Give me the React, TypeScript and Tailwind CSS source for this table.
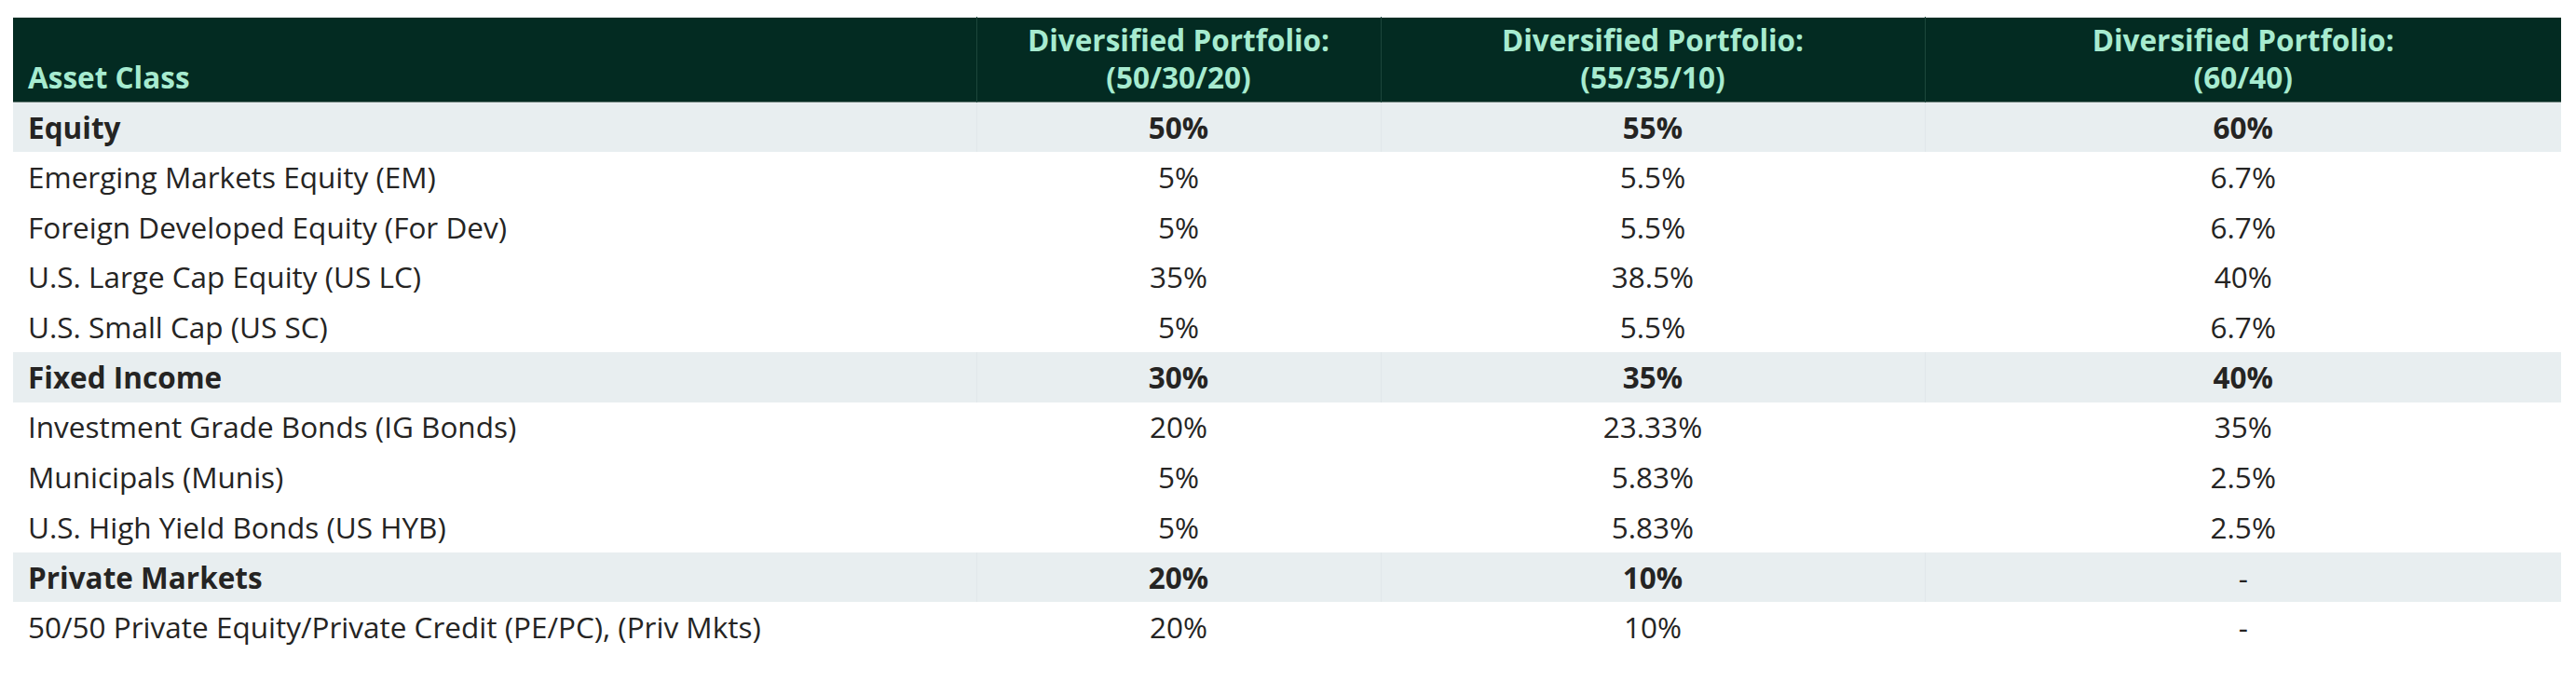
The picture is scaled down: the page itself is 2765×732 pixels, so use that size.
const rows: { label: string; values: string[]; group?: boolean }[] = [
  { label: "Equity", values: ["50%", "55%", "60%"], group: true },
  { label: "Emerging Markets Equity (EM)", values: ["5%", "5.5%", "6.7%"] },
  { label: "Foreign Developed Equity (For Dev)", values: ["5%", "5.5%", "6.7%"] },
  { label: "U.S. Large Cap Equity (US LC)", values: ["35%", "38.5%", "40%"] },
  { label: "U.S. Small Cap (US SC)", values: ["5%", "5.5%", "6.7%"] },
  { label: "Fixed Income", values: ["30%", "35%", "40%"], group: true },
  { label: "Investment Grade Bonds (IG Bonds)", values: ["20%", "23.33%", "35%"] },
  { label: "Municipals (Munis)", values: ["5%", "5.83%", "2.5%"] },
  { label: "U.S. High Yield Bonds (US HYB)", values: ["5%", "5.83%", "2.5%"] },
  { label: "Private Markets", values: ["20%", "10%", "-"], group: true },
  { label: "50/50 Private Equity/Private Credit (PE/PC), (Priv Mkts)", values: ["20%", "10%", "-"] },
];

const portfolios = ["(50/30/20)", "(55/35/10)", "(60/40)"];

const App = () => {
  return (
    <div className="min-h-[732px] w-[2765px] bg-white pl-[14px] pt-[18px] font-['Open_Sans','Noto_Sans',sans-serif]">
      <table className="w-[2735px] table-fixed border-collapse border-t border-[#e3e6e6]">
        <colgroup>
          <col className="w-[1034px]" />
          <col className="w-[434px]" />
          <col className="w-[584px]" />
          <col className="w-[683px]" />
        </colgroup>
        <thead>
          <tr className="h-[91px] bg-[#032b22] border-b border-[#667a74]">
            <th className="px-4 pb-[6px] text-left align-bottom text-[31.5px] font-bold leading-[40px] text-[#a7ebd0]">
              Asset Class
            </th>
            {portfolios.map((p) => (
              <th
                key={p}
                className="border-l border-[#1c463b] px-4 pb-[6px] text-center align-bottom text-[31.5px] font-bold leading-[40px] text-[#a7ebd0]"
              >
                Diversified Portfolio:
                <br />
                {p}
              </th>
            ))}
          </tr>
        </thead>
        <tbody>
          {rows.map((r) => (
            <tr key={r.label} className={r.group ? "bg-[#e8eef0]" : "bg-white"}>
              <td
                className={`h-[53.7px] px-4 py-0 text-left align-middle text-[31.5px] leading-[40px] text-[#252423] ${
                  r.group ? "font-bold" : "font-normal"
                }`}
              >
                {r.label}
              </td>
              {r.values.map((v, i) => (
                <td
                  key={i}
                  className={`h-[53.7px] px-4 py-0 text-center align-middle text-[31.5px] leading-[40px] text-[#252423] ${
                    r.group ? "border-l border-[#e1e7ea]" : "border-l border-white"
                  } ${r.group && v !== "-" ? "font-bold" : "font-normal"}`}
                >
                  {v}
                </td>
              ))}
            </tr>
          ))}
        </tbody>
      </table>
    </div>
  );
};

export default App;
